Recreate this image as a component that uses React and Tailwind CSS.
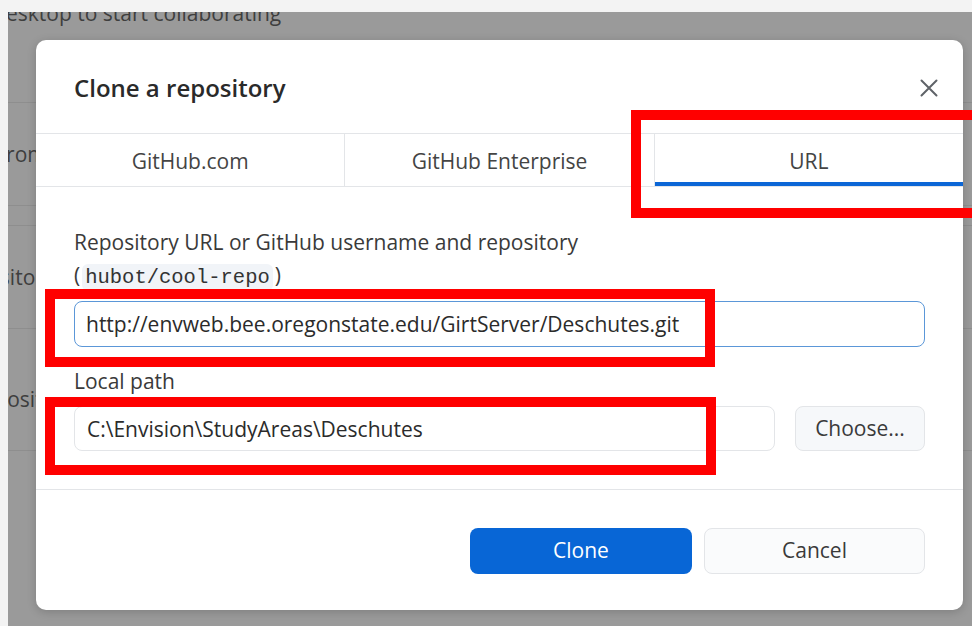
import React, { useState } from "react";

const tabs = ["GitHub.com", "GitHub Enterprise", "URL"];

function CloseIcon() {
  return (
    <svg width="18" height="18" viewBox="0 0 18 18" fill="none">
      <path
        d="M1.5 1.5L16.5 16.5M16.5 1.5L1.5 16.5"
        stroke="#5f6368"
        strokeWidth="2"
        strokeLinecap="round"
      />
    </svg>
  );
}

export default function App() {
  const [activeTab, setActiveTab] = useState("URL");
  const [url, setUrl] = useState(
    "http://envweb.bee.oregonstate.edu/GirtServer/Deschutes.git"
  );
  const [localPath, setLocalPath] = useState(
    "C:\\Envision\\StudyAreas\\Deschutes"
  );

  return (
    <div className="relative w-[972px] h-[626px] overflow-hidden bg-[#f3f3f3] font-['Open_Sans',sans-serif]">
      {/* window chrome above the dimmed app */}
      <div className="h-[12px]" />

      <div className="flex h-[614px]">
        <div className="w-[8px]" />

        {/* app behind the modal, dimmed */}
        <div className="flex-1 overflow-hidden bg-[#9a9a9a] text-[#3e3e3e] text-[21px] leading-none whitespace-nowrap">
          <p className="-mt-[9px] -ml-[2px]">esktop to start collaborating</p>

          <div className="mt-[78px] h-[104px] border-y border-[#8e8e8e] pt-[41px]">
            <span className="block -ml-[9px]">from the Internet…</span>
          </div>
          <div className="mt-[19px] h-[103px] border-t border-[#8e8e8e] pt-[41px]">
            <span className="block -ml-[54px]">repository on your hard drive…</span>
          </div>
          <div className="h-[123px] border-y border-[#8e8e8e] pt-[60px]">
            <span className="block -ml-[34px]">repository from your hard drive…</span>
          </div>
        </div>
      </div>

      {/* Clone dialog */}
      <div className="absolute left-[36px] top-[40px] w-[927px] h-[570px] flex flex-col bg-white rounded-[10px] shadow-[0_2px_10px_rgba(0,0,0,0.18)]">
        <div className="h-[93px] flex items-center justify-between pl-[38px] pr-[25px] pt-[2px]">
          <h2 className="text-[24px] font-semibold text-[#2a2a2a]">
            Clone a repository
          </h2>
          <button className="p-0">
            <CloseIcon />
          </button>
        </div>

        <div className="flex h-[54px] border-y border-[#e3e5e8]">
          {tabs.map((tab, i) => (
            <button
              key={tab}
              onClick={() => setActiveTab(tab)}
              className={`flex-1 flex items-center justify-center pt-[3px] text-[21px] text-[#444] ${
                i > 0 ? "border-l border-[#e3e5e8]" : ""
              } ${
                activeTab === tab ? "shadow-[inset_0_-4px_0_#0b66d6]" : ""
              }`}
            >
              {tab}
            </button>
          ))}
        </div>

        <div className="px-[38px] pt-[39px] pb-[38px] border-b border-[#e3e5e8] text-[21px] text-[#3a3a3a]">
          <div className="leading-[33px]">
            <p>Repository URL or GitHub username and repository</p>
            <p>
              (
              <code className="mx-[2px] px-[3px] py-[2px] rounded-md bg-[#f1f4f8] font-['Liberation_Mono',monospace] text-[20.5px] text-[#333]">
                hubot/cool-repo
              </code>
              )
            </p>
          </div>

          <input
            value={url}
            onChange={(e) => setUrl(e.target.value)}
            className="mt-[7px] w-full h-[46px] px-[11px] rounded-[8px] border-[1.5px] border-[#5b97d8] text-[#2b2b2b] outline-none"
          />

          <p className="mt-[18px] leading-[33px]">Local path</p>
          <div className="mt-[8px] flex gap-[20px]">
            <input
              value={localPath}
              onChange={(e) => setLocalPath(e.target.value)}
              className="flex-1 h-[45px] px-[12px] rounded-[8px] border border-[#e3e5e8] text-[#2b2b2b] outline-none"
            />
            <button className="w-[130px] h-[45px] rounded-[8px] border border-[#e3e5e8] bg-[#f6f8fa] text-[#3a3a3a]">
              Choose...
            </button>
          </div>
        </div>

        <div className="flex justify-end gap-[12px] px-[38px] pt-[38px] text-[21px]">
          <button className="w-[222px] h-[46px] rounded-[8px] bg-[#0866d6] text-white">
            Clone
          </button>
          <button className="w-[221px] h-[46px] rounded-[8px] border border-[#e3e5e8] bg-[#fafbfc] text-[#3a3a3a]">
            Cancel
          </button>
        </div>
      </div>

      {/* red callouts drawn on top */}
      <div className="absolute left-[631px] top-[110px] w-[360px] h-[108px] border-[10px] border-[#ff0000]" />
      <div className="absolute left-[45px] top-[289px] w-[670px] h-[78px] border-[10px] border-[#ff0000]" />
      <div className="absolute left-[45px] top-[397px] w-[671px] h-[78px] border-[10px] border-[#ff0000]" />
    </div>
  );
}
